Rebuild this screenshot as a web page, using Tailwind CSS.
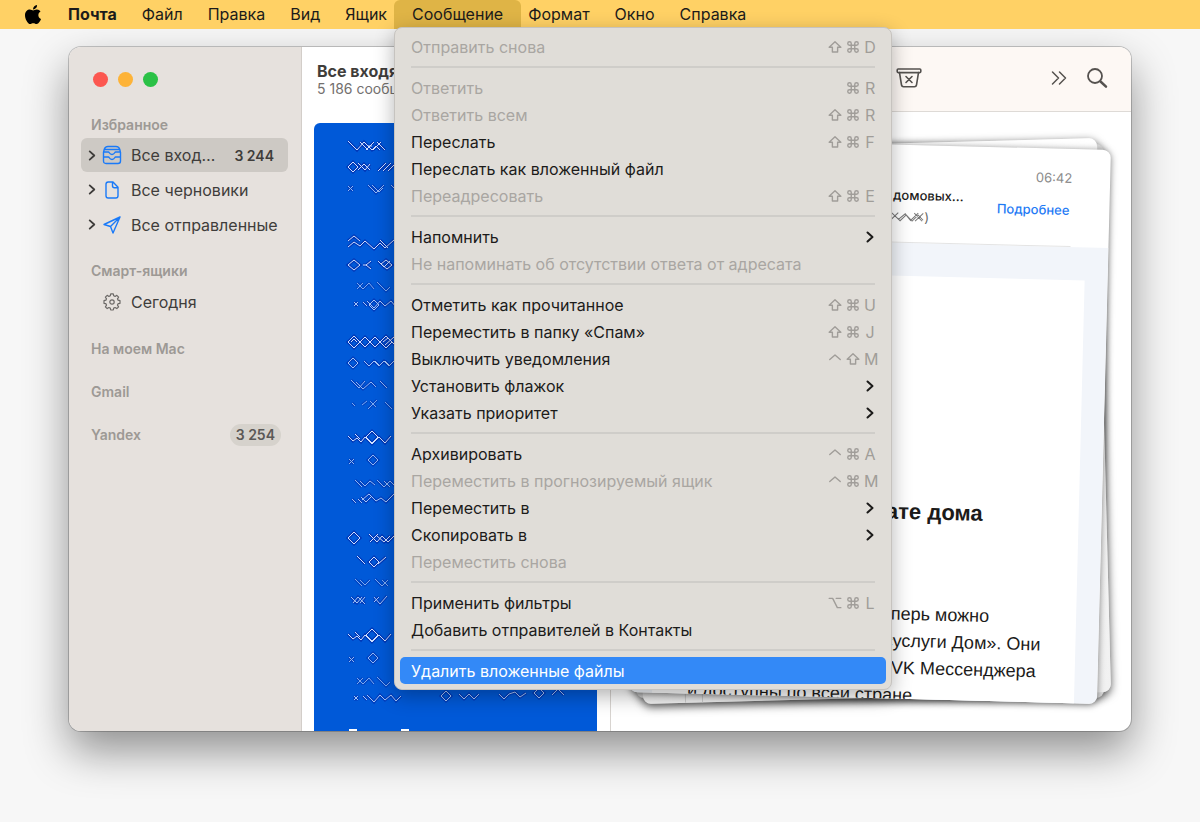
<!DOCTYPE html>
<html lang="ru">
<head>
  <meta charset="UTF-8" />
  <meta name="viewport" content="width=device-width, initial-scale=1.0" />
  <title>Почта</title>
  <script src="https://cdn.jsdelivr.net/npm/@tailwindcss/browser@4"></script>
</head>
<body class="flex min-h-screen flex-col overflow-hidden bg-[#f7f7f7] font-['Inter',sans-serif] text-[#1c1b1a]">

  <!-- shared icons -->
  <svg class="hidden">
    <symbol id="cmd" viewBox="0 0 24 24"><path d="M15 6v12a3 3 0 1 0 3-3H6a3 3 0 1 0 3 3V6a3 3 0 1 0-3 3h12a3 3 0 1 0-3-3" fill="none" stroke="currentColor" stroke-width="2.400"/></symbol>
    <symbol id="shift" viewBox="0 0 24 24"><path d="M12 3 22 12.500H16.500V20.500H7.500V12.500H2Z" fill="none" stroke="currentColor" stroke-width="2.400" stroke-linejoin="round"/></symbol>
    <symbol id="ctrl" viewBox="0 0 24 24"><path d="M3 13 12 5l9 8" fill="none" stroke="currentColor" stroke-width="2.400" stroke-linecap="round" stroke-linejoin="round"/></symbol>
    <symbol id="opt" viewBox="0 0 24 24"><path d="M2 4h6l8 16h6M14 4h8" fill="none" stroke="currentColor" stroke-width="2.400" stroke-linecap="round" stroke-linejoin="round"/></symbol>
    <symbol id="chevron" viewBox="0 0 8 12"><path d="M1.500 1.500 6.500 6l-5 4.500" fill="none" stroke="currentColor" stroke-width="2" stroke-linecap="round" stroke-linejoin="round"/></symbol>
  </svg>

  <header class="relative z-10 flex h-[29px] items-stretch bg-[#ffd165] pl-[25px] text-[16px]">
    <button aria-label="Apple" class="mr-[9px] pb-px"><svg class="h-[19px] w-4" viewBox="4 32 376 448" preserveAspectRatio="none"><path d="M318.700 268.700c-.2-36.700 16.400-64.400 50-84.800-18.800-26.900-47.200-41.700-84.700-44.600-35.500-2.800-74.300 20.700-88.500 20.700-15 0-49.400-19.700-76.400-19.700C63.300 141.200 4 184.800 4 273.500q0 39.300 14.400 81.200c12.800 36.700 59 126.700 107.200 125.200 25.200-.6 43-17.900 75.800-17.900 31.800 0 48.300 17.900 76.400 17.900 48.600-.7 90.400-82.500 102.600-119.300-65.200-30.700-61.700-90-61.700-91.900zm-56.600-164.200c27.300-32.400 24.800-61.900 24-72.500-24.100 1.400-52 16.400-67.900 34.900-17.500 19.800-27.800 44.300-25.600 71.900 26.100 2 49.900-11.400 69.500-34.300z"/></svg></button>
    <nav class="flex items-stretch">
      <button class="-mr-[11px] px-[18px] pb-0.5 font-bold">Почта</button>
      <button class="-mr-[11px] px-[18px] pb-0.5">Файл</button>
      <button class="-mr-[11px] px-[18px] pb-0.5">Правка</button>
      <button class="-mr-[11px] px-[18px] pb-0.5">Вид</button>
      <button class="-mr-[11px] px-[18px] pb-0.5">Ящик</button>
      <div class="relative -mr-[11px] flex">
        <button aria-haspopup="menu" aria-expanded="true" class="rounded-t-md bg-[#dfb446] px-[18px] pb-0.5">Сообщение</button>
        <div id="menu" role="menu" class="absolute top-[27px] left-0 w-[498px] rounded-lg border border-[#c6c3bf] bg-[#e0ddd8] p-[5px] shadow-[0_6px_20px_rgba(0,0,0,0.3)]"></div>
      </div>
      <button class="-mr-[11px] px-[18px] pb-0.5">Формат</button>
      <button class="-mr-[11px] px-[18px] pb-0.5">Окно</button>
      <button class="-mr-[11px] px-[18px] pb-0.5">Справка</button>
    </nav>
  </header>

  <main class="flex flex-1 flex-col px-[69px] pt-[18px] pb-[91px]">
    <div class="flex flex-1 overflow-hidden rounded-xl bg-white shadow-[0_0_0_1px_rgba(0,0,0,0.2),0_20px_44px_rgba(0,0,0,0.42)]">

      <!-- sidebar -->
      <aside class="flex w-[233px] shrink-0 flex-col border-r border-[#d3cec9] bg-[#e6e1dd] px-3 text-[16px] text-[#3f3d3b]">
        <div class="flex h-16 items-center gap-[10px] pl-3">
          <button aria-label="Закрыть" class="size-[15px] rounded-full bg-[#fc5750]"></button>
          <button aria-label="Свернуть" class="size-[15px] rounded-full bg-[#fdb338]"></button>
          <button aria-label="Развернуть" class="size-[15px] rounded-full bg-[#2bc146]"></button>
        </div>
        <h2 class="mt-[3px] pl-[10px] text-[14px] leading-[22px] font-semibold text-[#9d9995]">Избранное</h2>
        <a href="#" class="mt-0.5 flex h-[34px] w-[207px] items-center rounded-md bg-[#cdc9c4] pr-[14px] pl-[7px]">
          <svg class="h-[11px] w-2"><use href="#chevron"/></svg>
          <svg class="mx-[6px] h-5 w-5" viewBox="0 0 20 20" fill="none" stroke="#1a7af8" stroke-width="1.400" stroke-linejoin="round" stroke-linecap="round"><path d="M1.500 7.500 2.200 4.500Q3 1.500 6 1.500h8q3 0 3.800 3l.7 3v8.500q0 2.500-2.500 2.500H4q-2.500 0-2.500-2.500ZM2 7h4.500c.9 0 .8 2.500 3.500 2.500S12.600 7 13.500 7H18M2.500 4.500h15M1.500 12h5c.9 0 .8 2.500 3.500 2.500s2.600-2.500 3.500-2.500h5"/></svg>
          <span class="ml-[3px] flex-1">Все вход…</span>
          <span class="text-[14px] font-semibold">3 244</span>
        </a>
        <a href="#" class="flex h-[35px] items-center pl-[7px]">
          <svg class="h-[11px] w-2"><use href="#chevron"/></svg>
          <svg class="mx-[6px] h-5 w-5" viewBox="0 0 20 20" fill="none" stroke="#1a7af8" stroke-width="1.400" stroke-linejoin="round"><path d="M11 2H6.200Q4 2 4 4.200v11.600Q4 18 6.200 18h7.600q2.200 0 2.200-2.200V7.200ZM10.500 2v3.700q0 2 2 2H16"/></svg>
          <span class="ml-[3px]">Все черновики</span>
        </a>
        <a href="#" class="flex h-[35px] items-center pl-[7px]">
          <svg class="h-[11px] w-2"><use href="#chevron"/></svg>
          <svg class="mx-[6px] h-5 w-5" viewBox="0 0 20 20" fill="none" stroke="#1a7af8" stroke-width="1.400" stroke-linejoin="round"><path d="M18 2 2 9.500l6.500 2L11 18ZM18 2 8.500 11.500"/></svg>
          <span class="ml-[3px] whitespace-nowrap">Все отправленные</span>
        </a>
        <h2 class="mt-[18px] pl-[10px] text-[14px] leading-[22px] font-semibold text-[#9d9995]">Смарт-ящики</h2>
        <a href="#" class="mt-[3px] flex h-[34px] items-center pl-[21px]">
          <svg class="mr-[6px] h-5 w-5" viewBox="0 0 20 20" fill="none" stroke="#6c6967" stroke-width="1.200" stroke-linejoin="round"><path d="M8.300 3.800 8.700 1.900h2.600l.4 1.900 1.400.6 1.700-1.100 1.800 1.800-1.100 1.700.6 1.400 1.900.5v2.600l-1.900.4-.6 1.400 1.100 1.700-1.800 1.800-1.700-1.100-1.400.6-.4 1.900H8.700l-.4-1.900-1.400-.6-1.700 1.100-1.800-1.800 1.100-1.700-.6-1.400-1.900-.4V8.700l1.900-.5.6-1.400-1.100-1.700 1.800-1.800 1.700 1.100Z"/><circle cx="10" cy="10" r="2.200"/></svg>
          <span class="ml-[3px]">Сегодня</span>
        </a>
        <h2 class="mt-[19px] pl-[10px] text-[14px] leading-[22px] font-semibold text-[#9d9995]">На моем Mac</h2>
        <h2 class="mt-[21px] pl-[10px] text-[14px] leading-[22px] font-semibold text-[#9d9995]">Gmail</h2>
        <h2 class="mt-[21px] flex items-center justify-between pr-2 pl-[10px] text-[14px] leading-[22px] font-semibold text-[#9d9995]">Yandex
          <span class="rounded-full bg-[#d6d2cc] px-[6px] text-[#5b5856]">3 254</span>
        </h2>
      </aside>

      <!-- message list -->
      <section class="flex w-[309px] shrink-0 flex-col border-r border-[#d8d4d0]">
        <div class="h-[65px] pt-[14px] pl-[15px] whitespace-nowrap">
          <h1 class="text-[16px] leading-5 font-bold text-[#3f3d3b]">Все входя</h1>
          <p class="text-[14px] leading-4 text-[#73706e]">5 186 сообщ</p>
        </div>
        <div class="relative mt-[11px] mr-[13px] ml-3 flex-1 overflow-hidden rounded-t-md bg-[#0059d8]">
          <svg class="absolute top-0 left-0" width="283" height="608" fill="none">
            <g id="scribble"></g>
          </svg>
        </div>
      </section>

      <!-- message -->
      <section class="flex min-w-0 flex-1 flex-col">
        <div class="flex h-[65px] items-center justify-end border-b border-[#dedad6] bg-[#fdf8f4] pr-[23px] pb-0.5 text-[#55524f]">
          <button aria-label="В спам" class="mr-auto ml-[285px]"><svg class="h-[22px] w-[26px]" viewBox="0 0 26 22" fill="none" stroke="currentColor" stroke-width="1.600" stroke-linejoin="round" stroke-linecap="round"><rect x="1.200" y="2" width="23.600" height="3.600" rx="1"/><path d="M3.500 5.600 5.500 18q.3 1.700 2 1.700h11q1.700 0 2-1.700l2-12.400M10 9.500l6 6m0-6-6 6"/></svg></button>
          <button aria-label="Ещё" class="mr-[19px]"><svg class="h-4 w-4" viewBox="0 0 16 16" fill="none" stroke="currentColor" stroke-width="1.500" stroke-linecap="round" stroke-linejoin="round"><path d="M1.500 2 7.500 8l-6 6M8.500 2l6 6-6 6"/></svg></button>
          <button aria-label="Поиск"><svg class="h-[22px] w-[22px]" viewBox="0 0 22 22" fill="none" stroke="currentColor" stroke-linecap="round"><circle cx="9" cy="9" r="7" stroke-width="1.800"/><path d="m14.500 14.500 5.500 5.200" stroke-width="2.500"/></svg></button>
        </div>
        <div class="flex flex-1 pt-8 pr-[27px] pb-[33px] pl-[25px]">
          <div class="relative flex-1">
            <div class="absolute inset-0 -rotate-[1.450deg] rounded-lg bg-[#f4f4f4] shadow-[0_3px_10px_rgba(0,0,0,0.65)]"></div>
            <div class="absolute inset-0 rounded-lg bg-[#d8d8d8] shadow-[0_2px_8px_rgba(0,0,0,0.45)]"></div>
            <div class="absolute inset-0 -rotate-[1.450deg] rounded-lg bg-linear-to-b from-white to-[#f1f1f1]">
              <div class="ml-[42px] h-full w-[18px] border-x border-[#cfcfcf]"></div>
            </div>
            <article class="absolute inset-0 flex rotate-[1.450deg] flex-col overflow-hidden rounded-lg bg-white shadow-[0_1px_7px_rgba(0,0,0,0.5)]">
              <div class="relative mx-[38px] h-[98px] shrink-0 border-b border-[#e4e4e4] text-[13px]">
                <time class="absolute top-5 right-0 leading-[18px] text-[#8b8b8b]">06:42</time>
                <a href="#" class="absolute top-[52px] right-[2px] leading-[18px] font-medium text-[#1f7bf5]">Подробнее</a>
                <p class="absolute top-[41px] right-[108px] leading-[18px] font-medium">домовых…</p>
                <p class="absolute top-[63px] right-[142px] flex items-center leading-[18px] text-[#666]">
                  <svg class="h-3 w-[42px]" viewBox="0 0 42 12" fill="none" stroke="#777"><path d="m2 2 7 7 7-7M2 9l7-7 9 8 6-6 6 6 6-6 5 5M16 9l7-6 5 6m0 1 8-8m-3 8 8-8m-9 0 8 8"/></svg>)
                </p>
              </div>
              <div class="flex-1 bg-[#f2f5fa] px-[23px] pt-[33px]">
                <div class="h-full overflow-hidden bg-white pt-[223px] pl-[35px] font-['Liberation_Sans',Arial,sans-serif] whitespace-nowrap">
                  <h2 class="flex w-[291px] justify-end text-[22px] leading-[26px] font-bold">ате дома</h2>
                  <div class="pt-[76px] text-[18px] leading-[27px]">
                    <p class="flex w-[300px] justify-end">еперь можно</p>
                    <p class="flex w-[352px] justify-end">суслуги Дом». Они</p>
                    <p class="flex w-[348px] justify-end">VK Мессенджера</p>
                    <p>и доступны по всей стране</p>
                  </div>
                </div>
              </div>
            </article>
          </div>
        </div>
      </section>
    </div>
  </main>

  <script>
    // [title, shortcut keys, state]
    const groups = [
      [['Отправить снова', 'shift cmd D', 'off']],
      [
        ['Ответить', 'cmd R', 'off'],
        ['Ответить всем', 'shift cmd R', 'off'],
        ['Переслать', 'shift cmd F'],
        ['Переслать как вложенный файл', ''],
        ['Переадресовать', 'shift cmd E', 'off'],
      ],
      [['Напомнить', 'sub'], ['Не напоминать об отсутствии ответа от адресата', '', 'off']],
      [
        ['Отметить как прочитанное', 'shift cmd U'],
        ['Переместить в папку «Спам»', 'shift cmd J'],
        ['Выключить уведомления', 'ctrl shift M'],
        ['Установить флажок', 'sub'],
        ['Указать приоритет', 'sub'],
      ],
      [
        ['Архивировать', 'ctrl cmd A'],
        ['Переместить в прогнозируемый ящик', 'ctrl cmd M', 'off'],
        ['Переместить в', 'sub'],
        ['Скопировать в', 'sub'],
        ['Переместить снова', '', 'off'],
      ],
      [['Применить фильтры', 'opt cmd L'], ['Добавить отправителей в Контакты', '']],
      [['Удалить вложенные файлы', '', 'active']],
    ];

    const itemClass = {
      off: 'text-[#a9a6a2]',
      active: 'rounded-[5px] bg-[#3389f7] text-white',
    };

    function keys(shortcut) {
      if (!shortcut) return '';
      if (shortcut === 'sub') return '<svg class="mr-[2px] h-3 w-2"><use href="#chevron"/></svg>';
      const cells = shortcut.split(' ').map(k => k.length === 1
        ? `<span class="w-3">${k}</span>`
        : `<svg class="size-[14px]"><use href="#${k}"/></svg>`);
      return `<span class="flex items-center gap-[4px] text-[#a09d99]">${cells.join('')}</span>`;
    }

    document.getElementById('menu').innerHTML = groups.map(items => items.map(([title, shortcut, state]) =>
      `<button role="menuitem" ${state === 'off' ? 'disabled' : ''} class="flex h-[27px] w-full items-center justify-between pr-[10px] pl-[11px] ${itemClass[state] || ''}"><span>${title}</span>${keys(shortcut)}</button>`
    ).join('')).join('<hr class="mx-[11px] my-[6px] border-t-2 border-[#cfcdc9]">');

    // blurred-out preview lines: top offset, opacity, path relative to the line
    const lines = [
      [23, 1, 'm0-5 9 9 7-8 8 8 4-4 4 4m-20-8 8 8m0-4h4m-6 4 8-8m-1 8 8-8m-4 0 8 8'],
      [44, 1, 'm0 0 5-5 5 5-5 5Zm10-4 7 7 5-6M10 3l6-6 6 6m8 1 8-8m-3 8 8-8m-3 8 8-8'],
      [65, .7, 'm0-2 5 5m-5 0 5-5m15-1 8 8 8-8m-12 0 7 7m0 0 4-4m8-3 8 8'],
      [120, 1, 'm0-2 6-5 6 5M0 4l6-5 6 4 5-5 9 8 6-6 5 5 9-8m-14 0 8 8'],
      [142, 1, 'm0 0 6-5 6 5-6 5Zm23-4-5 4 5 4m-8-4h4m11-4 6 6 6-6m-9 3 5-4 6 5-5 4Z'],
      [163, .6, 'm9-3 6 6m-6 0 6-6m0 6 6-6m0 0 5 6m3-7 9 9 4-4'],
      [181, .8, 'm6-2 4 4m0-4-4 4m9-4 4 4m0-5 7 7 6-7 5 5 6-5 5 6M21 1l5-5 5 5-5 5Z'],
      [219, 1, 'm0 0 6-6 6 6-6 6Zm3 0 3-3 3 3m3 0 5-5 5 5-5 5Zm10 0 5-5 5 5-5 5Zm10 0 6-6 6 6-6 6Zm3 0 5-4 7 7m-10 0 9-8'],
      [240, .8, 'm0 0 5-5 5 5-5 5Zm16-2 5 5 5-5 5 5 5-5 5 5 5-5m-19 0 5 5m5-5 5 5'],
      [262, .7, 'm3-5 8 8m-3-6 7 7 8-7 5 5m-17 1 6-7m15 0 7 7'],
      [281, .6, 'm4-1 3 3m7-1 5-4m1 8 9-9m-7 1 6 6m9-5 7 7'],
      [317, 1, 'm0-4 5 5 4-3 4 4 4-5 7 7 7-7 6 6 6-7m-25 1 6-6 6 6-6 6Zm-11-3 5 5'],
      [338, .7, 'm1-2 5 5m-5 0 5-5m14 1 5-5 5 5-5 5Z'],
      [360, .7, 'm7-3 7 7m-2-6 5 5 5-5 5 4m2-5 7 7m0-6 6 6m-6 0 6-6m0 0 6 6'],
      [378, .8, 'm4-2 4 4m2-4 4 4m0-3 7-6 7 7 5-3 5 4 8-8m-33 3 5 5 5-5'],
      [415, 1, 'm0 0 6-6 6 6-6 6Zm21-4 8 8 5-6 6 6 8-8m-26 8 8-8m-1 2 7 6 6-6'],
      [439, 1, 'm9-6 8 8m4-2 5-5 5 5-5 5Zm9 2 8-7'],
      [459, .6, 'm7-3 7 7m-2-6 5 5 5-5m5-1 7 7m0-6 6 6m-6 0 6-6'],
      [477, .8, 'm3-3 6 6 5-6m-9 6 5-6 7 7m0-7-5 6m14-6 6 7 7-8m-13 6 5-5'],
      [515, 1, 'm0-4 5 5 4-3 4 4 4-5 7 7 7-7 6 6 6-7m-25 1 6-6 6 6-6 6Zm-11-3 5 5'],
      [536, .7, 'm1-2 5 5m-5 0 5-5m14 1 5-5 5 5-5 5Z'],
      [558, .6, 'm9-3 6 6m-6 0 6-6m0 6 6-6m0 0 5 6m3-7 9 9 4-4'],
      [575, .8, 'm6-2 4 4m0-4-4 4m9-4 4 4m0-5 7 7 6-7 5 5 6-5 5 6 5-5m40 0 5-5 5 5-5 5Zm18-2 5 5 5-5 5 5 5-5m20 0 5 5 5-5 6-2 5 5 6-4m8 0 5-5 5 5-5 5Zm18 2 6-6 6 6'],
    ];
    document.getElementById('scribble').innerHTML = lines.map(([y, o, d]) =>
      `<g transform="translate(34 ${y})" opacity="${o}"><path stroke="#0038b8" stroke-width="3" d="${d}"/><path stroke="#cfe0ff" d="${d}"/></g>`
    ).join('') + '<path stroke-width="2" stroke="#fff" d="M35 607h8M87 607h8"/>';
  </script>
</body>
</html>
